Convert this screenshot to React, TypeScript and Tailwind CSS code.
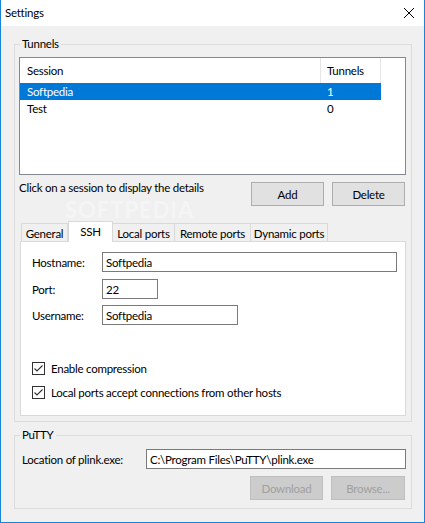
import type { ReactNode } from 'react'

const font = "font-['Lato','Liberation_Sans',sans-serif]"

function GroupBox({ title, className, children }: { title: string; className?: string; children: ReactNode }) {
  return (
    <div className={`relative border border-[#dcdcdc] ${className ?? ''}`}>
      <span className="absolute left-[5px] -top-[9px] px-[2px] bg-[#f0f0f0] leading-[15px]">{title}</span>
      {children}
    </div>
  )
}

function Button({ label, disabled, className }: { label: string; disabled?: boolean; className?: string }) {
  return (
    <div
      className={`h-[24px] flex items-center justify-center border ${
        disabled ? 'bg-[#cccccc] border-[#bfbfbf] text-[#a0a0a0]' : 'bg-[#e1e1e1] border-[#adadad]'
      } ${className ?? ''}`}
    >
      {label}
    </div>
  )
}

function TextBox({ value, className }: { value: string; className?: string }) {
  return (
    <div className={`h-[20px] bg-white border border-[#7a7a7a] flex items-center pl-[3px] ${className ?? ''}`}>
      {value}
    </div>
  )
}

function CheckBox({ label, className }: { label: string; className?: string }) {
  return (
    <div className={`flex items-center ${className ?? ''}`}>
      <svg width="13" height="13" viewBox="0 0 13 13" className="shrink-0">
        <rect x="0.5" y="0.5" width="12" height="12" fill="white" stroke="#333" />
        <path d="M2.5 6.5 L5 9 L10.5 3.5" fill="none" stroke="#333" strokeWidth="1.1" />
      </svg>
      <span className="ml-[6px]">{label}</span>
    </div>
  )
}

const sessions = [
  { name: 'Softpedia', tunnels: 1, selected: true },
  { name: 'Test', tunnels: 0, selected: false },
]

const tabs = [
  { label: 'General', w: 'w-[47px]' },
  { label: 'SSH', w: 'w-[45px]', active: true },
  { label: 'Local ports', w: 'w-[62px]' },
  { label: 'Remote ports', w: 'w-[76px]' },
  { label: 'Dynamic ports', w: 'w-[77px]' },
]

export default function App() {
  return (
    <div
      className={`relative w-[425px] h-[523px] flex flex-col border-x border-b border-[#1883d7] bg-[#f0f0f0] ${font} text-[11.5px] tracking-[-0.25px] leading-[15px] text-black overflow-hidden`}
    >
      <div className="h-[26px] shrink-0 bg-white flex items-center justify-between pl-[4px] pr-[10px] pb-px">
        <span>Settings</span>
        <svg width="10" height="10" viewBox="0 0 10 10">
          <path d="M0 0 L10 10 M10 0 L0 10" stroke="#000" strokeWidth="1" />
        </svg>
      </div>

      <div className="flex flex-col pl-[13px] pr-[12px]">
        <GroupBox title="Tunnels" className="mt-[18px] h-[378px] flex flex-col">
          {/* session list */}
          <div className="mt-[12px] ml-[4px] mr-[5px] h-[118px] bg-white border border-[#828790]">
            <div className="flex h-[25px]">
              <div className="w-[301px] pl-[7px] flex items-center border-r border-[#e5e5e5]">Session</div>
              <div className="w-[60px] pl-[6px] flex items-center border-r border-[#e5e5e5]">Tunnels</div>
            </div>
            {sessions.map((s) => (
              <div
                key={s.name}
                className={`flex h-[17px] w-[361px] items-center ${s.selected ? 'bg-[#0078d7] text-white' : ''}`}
              >
                <div className="w-[301px] pl-[7px]">{s.name}</div>
                <div className="w-[60px] pl-[6px]">{s.tunnels}</div>
              </div>
            ))}
          </div>

          <div className="mt-[7px] flex items-start">
            <span className="ml-[4px] -mt-[2px] flex-1">Click on a session to display the details</span>
            <Button label="Add" className="w-[73px]" />
            <Button label="Delete" className="w-[73px] ml-[8px] mr-[6px]" />
          </div>

          {/* tabs */}
          <div className="mt-[15px] ml-[6px] flex items-end">
            {tabs.map((t) =>
              t.active ? (
                <div
                  key={t.label}
                  className={`${t.w} h-[21px] -mb-px relative z-10 bg-white border-x border-t border-[#d9d9d9] flex justify-center pt-[2px]`}
                >
                  {t.label}
                </div>
              ) : (
                <div
                  key={t.label}
                  className={`${t.w} h-[18px] border-r border-t border-[#d9d9d9] first:border-l bg-[#f0f0f0] flex justify-center pt-[2px] whitespace-nowrap`}
                >
                  {t.label}
                </div>
              ),
            )}
          </div>
          <div className="ml-[5px] mr-[5px] h-[175px] bg-white border border-[#d9d9d9] pt-[10px] pl-[11px]">
            <div className="flex items-center">
              <span className="w-[70px]">Hostname:</span>
              <TextBox value="Softpedia" className="w-[295px]" />
            </div>
            <div className="flex items-center mt-[7px]">
              <span className="w-[70px]">Port:</span>
              <TextBox value="22" className="w-[56px]" />
            </div>
            <div className="flex items-center mt-[6px]">
              <span className="w-[70px]">Username:</span>
              <TextBox value="Softpedia" className="w-[136px]" />
            </div>
            <CheckBox label="Enable compression" className="mt-[36px]" />
            <CheckBox label="Local ports accept connections from other hosts" className="mt-[9px]" />
          </div>
        </GroupBox>

        <GroupBox title="PuTTY" className="mt-[13px] h-[74px]">
          <div className="mt-[13px] flex items-center">
            <span className="pl-[7px] w-[131px]">Location of plink.exe:</span>
            <TextBox value={'C:\\Program Files\\PuTTY\\plink.exe'} className="flex-1 mr-[5px]" />
          </div>
          <div className="mt-[7px] flex justify-end">
            <Button label="Download" disabled className="w-[73px]" />
            <Button label="Browse..." disabled className="w-[74px] ml-[8px] mr-[6px]" />
          </div>
        </GroupBox>
      </div>

      <div className="absolute left-[64px] top-[201px] text-[22px] leading-[18px] font-bold text-white/40 tracking-[1px] pointer-events-none select-none">
        SOFTPEDIA
      </div>
    </div>
  )
}
